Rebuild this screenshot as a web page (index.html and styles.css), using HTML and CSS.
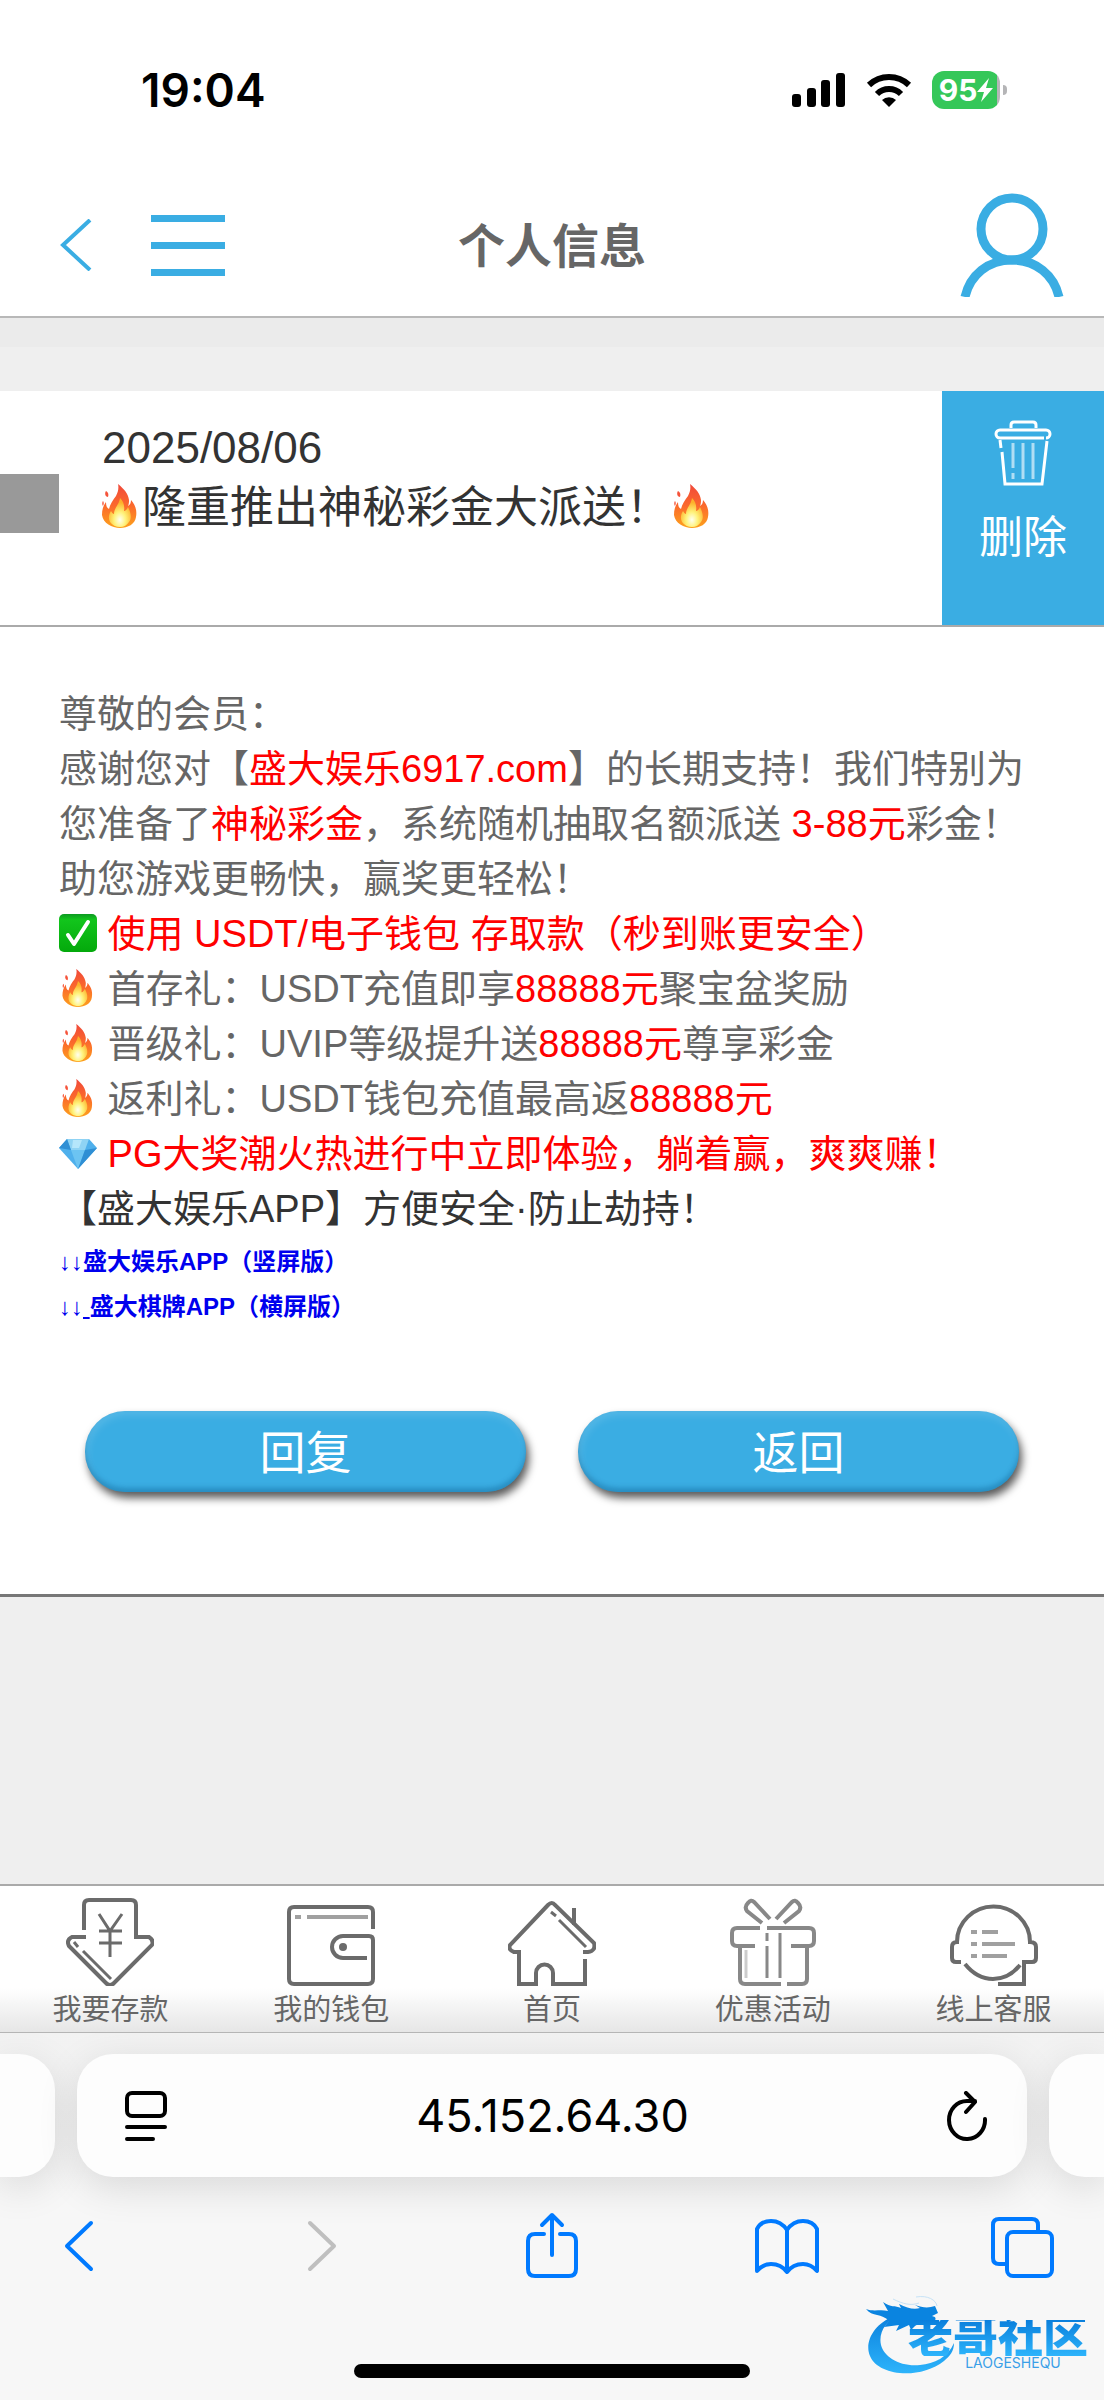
FILE: index.html
```html
<!DOCTYPE html>
<html lang="zh-CN">
<head>
    <meta charset="UTF-8">
    <meta name="viewport" content="width=device-width, initial-scale=1.0">
    <title>个人信息</title>
    <link rel="stylesheet" href="styles.css">
</head>
<body>

    <!-- shared emoji and gradients -->
    <svg class="defs" width="0" height="0" aria-hidden="true">
        <defs>
            <linearGradient id="flameOuter" x1="0" y1="0" x2="0" y2="1">
                <stop offset="0" stop-color="#f0483a"/>
                <stop offset="0.5" stop-color="#fb6a2c"/>
                <stop offset="1" stop-color="#fda11c"/>
            </linearGradient>
            <radialGradient id="flameInner" cx="0.5" cy="0.75" r="0.6">
                <stop offset="0" stop-color="#fffff0"/>
                <stop offset="0.45" stop-color="#fff27a"/>
                <stop offset="1" stop-color="#fdb02a"/>
            </radialGradient>
            <linearGradient id="greenBox" x1="0" y1="0" x2="0" y2="1">
                <stop offset="0" stop-color="#0c9a22"/>
                <stop offset="0.15" stop-color="#12c51c"/>
                <stop offset="1" stop-color="#04a90c"/>
            </linearGradient>
            <linearGradient id="dragonFill" x1="0" y1="0" x2="0" y2="1">
                <stop offset="0" stop-color="#0a7fdc"/>
                <stop offset="1" stop-color="#2db4fb"/>
            </linearGradient>
        </defs>
        <symbol id="fire" viewBox="0 0 44 44">
            <path fill="url(#flameOuter)" d="M20 0c6 5 10 9 11 16 0 2 0 4-1 6 2-1 3-3 3-6 5 6 6 11 5 17-1 7-8 11-16 11S5 39 4 31c0-5 1-9 4-13 0 4 1 6 3 7 1-5 4-9 7-13 2-4 3-8 2-12z"/>
            <path fill="#f5533a" d="M8 7c2 1 3 3 2 6-2 0-4-3-2-6zM5 17c1 1 1 3 0 5-1-1-1-4 0-5z"/>
            <path fill="url(#flameInner)" d="M22 14c3 3 5 7 4 13 2 0 3-2 4-4 3 6 4 11 1 15-2 3-5 5-9 5s-8-2-10-5c-2-4-1-8 1-11 1 2 2 3 3 3 0-6 5-9 6-16z"/>
        </symbol>
        <symbol id="check" viewBox="0 0 38 38">
            <rect x="0" y="0" width="38" height="38" rx="5" fill="url(#greenBox)"/>
            <path d="M9 21l6 9L29 8" fill="none" stroke="#fff" stroke-width="4" stroke-linecap="round" stroke-linejoin="round"/>
        </symbol>
        <symbol id="gem" viewBox="0 0 38 38">
            <path fill="#4fb0ec" d="M8 5h22l8 9-19 21L0 14z"/>
            <path fill="#8fd3f4" d="M8 5h22l-4 11H12z"/>
            <path fill="#6cc4f2" d="M12 16h14l-7 19z"/>
            <path fill="#2f8fd4" d="M26 16l12-2-19 21zM8 5l-8 9 12 2z"/>
            <path fill="#b5e6fb" d="M14 6h9l-3 8h-7z"/>
        </symbol>
    </svg>

    <div class="status-bar">
        <span class="time">19:04</span>
        <div class="status-icons">
            <svg width="54" height="34" viewBox="0 0 54 34">
                <rect x="0" y="21" width="9" height="13" rx="3"/>
                <rect x="15" y="15" width="9" height="19" rx="3"/>
                <rect x="29" y="7" width="9" height="27" rx="3"/>
                <rect x="44" y="0" width="9" height="34" rx="3"/>
            </svg>
            <svg width="46" height="34" viewBox="0 0 46 34">
                <path d="M23 34l-7-7a10 10 0 0 1 14 0z"/>
                <path d="M11 21a17 17 0 0 1 24 0M3 12a29 29 0 0 1 40 0" fill="none" stroke="#000" stroke-width="6"/>
            </svg>
            <div class="battery">
                <span>95</span>
                <svg width="16" height="24" viewBox="0 0 16 24"><path fill="#fff" d="M12 0L0 14h7L4 24l12-14H9z"/></svg>
            </div>
        </div>
    </div>

    <header class="header">
        <div class="header-left">
            <a href="#" class="icon-link" aria-label="返回上一页">
                <svg width="32" height="52" viewBox="0 0 32 52"><path d="M30 1L3 26l27 25" fill="none" stroke="#3aade3" stroke-width="4"/></svg>
            </a>
            <button class="menu-button" aria-label="菜单">
                <span></span><span></span><span></span>
            </button>
        </div>
        <h1>个人信息</h1>
        <a href="#" class="icon-link profile" aria-label="我的账户">
            <svg width="104" height="104" viewBox="0 0 104 104" fill="none" stroke="#3aade3" stroke-width="9">
                <circle cx="52" cy="36" r="31"/>
                <path d="M5 104C10 82 28 67 52 67s42 15 47 37"/>
            </svg>
        </a>
    </header>

    <main class="content">
        <div class="strip"></div>

        <div class="message-row">
            <span class="marker"></span>
            <div class="message-info">
                <div>2025/08/06</div>
                <div><svg class="emoji" role="img" aria-label="🔥"><use href="#fire"/></svg>隆重推出神秘彩金大派送！<svg class="emoji" role="img" aria-label="🔥"><use href="#fire"/></svg></div>
            </div>
            <button class="delete-button">
                <svg width="58" height="66" viewBox="0 0 58 66" fill="none" stroke="#fff" stroke-width="3">
                    <path d="M17 8V5q0-3 3-3h19q3 0 3 3v3"/>
                    <path d="M50 18H6a4 4 0 0 1 0-8h46a4 4 0 0 1 0 8"/>
                    <path d="M6 20l1 8M8 32l3 32h37l5-43"/>
                    <path d="M19 23v25M19 53v6M29 23v36M39 23v36" stroke-opacity="0.6"/>
                </svg>
                <span>删除</span>
            </button>
        </div>

        <section class="message">
            <div class="message-body">
                <p>尊敬的会员：</p>
                <p>感谢您对【<span class="red">盛大娱乐6917.com</span>】的长期支持！我们特别为您准备了<span class="red">神秘彩金</span>，系统随机抽取名额派送 <span class="red">3-88元</span>彩金！助您游戏更畅快，赢奖更轻松！</p>
                <p class="red"><svg class="emoji" role="img" aria-label="✅"><use href="#check"/></svg> 使用 USDT/电子钱包 存取款（秒到账更安全）</p>
                <p><svg class="emoji" role="img" aria-label="🔥"><use href="#fire"/></svg> 首存礼：USDT充值即享<span class="red">88888元</span>聚宝盆奖励</p>
                <p><svg class="emoji" role="img" aria-label="🔥"><use href="#fire"/></svg> 晋级礼：UVIP等级提升送<span class="red">88888元</span>尊享彩金</p>
                <p><svg class="emoji" role="img" aria-label="🔥"><use href="#fire"/></svg> 返利礼：USDT钱包充值最高返<span class="red">88888元</span></p>
                <p class="red"><svg class="emoji" role="img" aria-label="💎"><use href="#gem"/></svg> PG大奖潮火热进行中立即体验，躺着赢，爽爽赚！</p>
                <p class="dark">【盛大娱乐APP】方便安全·防止劫持！</p>
            </div>
            <div class="downloads">
                <p><a href="#"><span class="arrows">↓↓</span>盛大娱乐APP（竖屏版）</a></p>
                <p><a href="#"><span class="arrows">↓↓<u>&nbsp;</u></span>盛大棋牌APP（横屏版）</a></p>
            </div>
            <div class="actions">
                <button class="button">回复</button>
                <button class="button">返回</button>
            </div>
        </section>
    </main>

    <nav class="tab-bar">
        <a href="#">
            <svg width="88" height="88" viewBox="0 0 88 88">
                <path d="M18 32V7q0-5 5-5h42q5 0 5 5v32h13q5 3 3 8L48 85q-4 4-8 0L3 48q-3-6 3-9h14"/>
                <path class="thin" d="M33 16l11 17 12-17M44 33v26M33 33h23M33 45h23M8 44l4 5M17 53l28 28"/>
            </svg>
            <span>我要存款</span>
        </a>
        <a href="#">
            <svg width="88" height="88" viewBox="0 0 88 88">
                <path d="M86 31V14q0-5-5-5H7q-5 0-5 5v67q0 5 5 5h74q5 0 5-5V42q0-4-4-4H56a11 11 0 0 0 0 22h24"/>
                <circle class="dot" cx="56" cy="49" r="4"/>
                <path class="soft" d="M8 19h6M20 19h61"/>
            </svg>
            <span>我的钱包</span>
        </a>
        <a href="#">
            <svg width="88" height="88" viewBox="0 0 88 88">
                <path d="M77 61v25H45V75a8 8 0 0 0-17 0v11H11V54H6q-6-2-4-7L40 7q4-4 7 0l39 38q2 8-6 9h-5M66 10v17"/>
                <path class="thin" d="M43 14l5 4M51 22l27 27"/>
            </svg>
            <span>首页</span>
        </a>
        <a href="#">
            <svg class="pale" width="88" height="88" viewBox="0 0 88 88">
                <path d="M31 30H8q-5 0-5 5v8q0 5 5 5h18M38 30h42q5 0 5 5v8q0 5-5 5H62M11 48v33q0 5 5 5h36M78 48v33q0 5-5 5H58"/>
                <path d="M41 21L25 4q-3-3-6 1-4 4-1 8l15 12M47 21L63 4q3-3 6 1 4 4 1 8L55 25"/>
                <path class="thin" d="M38 35v8M38 48v32M51 35v45"/>
                <path class="faint" d="M17 52v28"/>
            </svg>
            <span>优惠活动</span>
        </a>
        <a href="#">
            <svg width="88" height="88" viewBox="0 0 88 88">
                <path d="M11 64H6q-4 0-4-4V49q0-5 5-5a36 35 0 0 1 73 0q6 0 6 5v11q0 4-4 4h-8v22H48M15 66q12 15 28 15t27-14"/>
                <path class="soft" d="M21 34h6M32 34h16M21 46h6M32 46h33M21 58h6M32 58h25"/>
            </svg>
            <span>线上客服</span>
        </a>
    </nav>

    <footer class="browser">
        <div class="address-row">
            <div class="side-tab left"></div>
            <div class="address">
                <button aria-label="阅读器">
                    <svg width="42" height="50" viewBox="0 0 42 50" fill="none" stroke="#000" stroke-width="4" stroke-linecap="round">
                        <rect x="2" y="2" width="38" height="23" rx="5"/>
                        <path d="M2 36h38M2 48h26"/>
                    </svg>
                </button>
                <input type="text" aria-label="地址" value="45.152.64.30" readonly>
                <button aria-label="刷新">
                    <svg width="42" height="50" viewBox="0 0 42 50" fill="none" stroke="#000" stroke-width="4" stroke-linecap="round" stroke-linejoin="round">
                        <path d="M39 28a18 19 0 1 1-18-18h8M20 2l9 9-9 10"/>
                    </svg>
                </button>
            </div>
            <div class="side-tab right"></div>
        </div>

        <div class="toolbar">
            <button aria-label="后退"><svg width="66" height="68" viewBox="0 0 66 68"><path d="M45 12L21 35l24 23"/></svg></button>
            <button class="disabled" aria-label="前进" disabled><svg width="66" height="68" viewBox="0 0 66 68"><path d="M28 12l24 23-24 23"/></svg></button>
            <button aria-label="分享"><svg width="66" height="68" viewBox="0 0 66 68"><path d="M27 23h-9q-7 0-7 7v28q0 7 7 7h34q7 0 7-7V30q0-7-7-7h-9M35 44V4M25 14L35 4l10 10"/></svg></button>
            <button aria-label="书签"><svg width="66" height="68" viewBox="0 0 66 68"><path d="M34 19Q28 10 18 10 8 10 4 18v42q6-7 14-7 10 0 16 8 6-8 16-8 8 0 14 7V18Q60 10 50 10q-10 0-16 9zM34 19v42"/></svg></button>
            <button aria-label="标签页"><svg width="66" height="68" viewBox="0 0 66 68"><path d="M17 53h-6q-6 0-6-6V14q0-6 6-6h33q6 0 6 6v7"/><rect x="19" y="21" width="45" height="44" rx="6"/></svg></button>
        </div>

        <div class="home-indicator"></div>

        <div class="watermark">
            <svg width="100" height="80" viewBox="0 0 100 80">
                <path fill="url(#dragonFill)" d="M28 20C8 28-2 46 4 60c8 20 50 24 74 5 6-5 10-10 10-18-6 14-20 21-34 22-20 2-36-8-39-20-3-13 6-25 18-30z"/>
                <path fill="#0a84e0" d="M0 13c8 3 14 0 22 2l-5-9c8 6 12 3 18 6l-2-4c8 4 15 6 21 4l-5-3c8 3 14 3 20 1l3 7-6 3c4 1 4 2 3 5-5-1-8-1-11 1l5 4c-7-1-10-3-14 0l-4 4-2-5-13 6 3-6-15 2 5-6C16 17 6 21 0 13z"/>
                <path d="M27 3c10 5 18 7 26 4M50 1c12-2 20 3 21 9" fill="none" stroke="#c6e2f6" stroke-width="1"/>
            </svg>
            <div class="watermark-text">
                <strong>老哥社区</strong>
                <small>LAOGESHEQU</small>
            </div>
        </div>
    </footer>

</body>
</html>
```
FILE: styles.css
```css
* {
    box-sizing: border-box;
}
body {
    display: flex;
    flex-direction: column;
    min-height: 100vh;
    margin: 0;
    background-color: #efefef;
    color: #666666;
    font-family: "Liberation Sans", "Noto Sans CJK SC", sans-serif;
}
button {
    padding: 0;
    border: none;
    background: none;
    color: inherit;
    font-family: inherit;
    cursor: pointer;
}
a {
    text-decoration: none;
}
svg {
    display: block;
}
h1, p {
    margin: 0;
}
.defs {
    position: absolute;
}

/* phone status bar */
.status-bar {
    display: flex;
    align-items: center;
    justify-content: space-between;
    height: 176px;
    padding: 4px 104px 0 141px;
    background-color: #ffffff;
    color: #000000;
    font-family: Inter, sans-serif;
}
.time {
    font-size: 46px;
    font-weight: 600;
}
.status-icons {
    display: flex;
    align-items: center;
    gap: 20px;
}
.battery {
    position: relative;
    display: flex;
    align-items: center;
    justify-content: center;
    width: 68px;
    height: 38px;
    border-radius: 12px;
    background: linear-gradient(to right, #35c759 65px, #b5b5b7 65px);
    color: #ffffff;
    font-size: 30px;
    font-weight: 700;
}
.battery::after {
    content: "";
    position: absolute;
    right: -7px;
    width: 4px;
    height: 10px;
    border-radius: 0 5px 5px 0;
    background-color: #b5b5b7;
}

/* header */
.header {
    display: grid;
    grid-template-columns: 1fr auto 1fr;
    align-items: center;
    height: 142px;
    padding: 0 40px 2px 60px;
    border-bottom: 2px solid #b8b8b8;
    background-color: #ffffff;
}
.header-left {
    display: flex;
    align-items: center;
    gap: 59px;
}
.menu-button {
    display: flex;
    flex-direction: column;
    gap: 20px;
}
.menu-button span {
    width: 74px;
    height: 7px;
    background-color: #3aade3;
}
.header h1 {
    margin-right: 20px;
    padding-top: 4px;
    font-size: 47px;
    font-weight: bold;
    line-height: 60px;
}
.profile {
    justify-self: end;
}

/* message */
.content {
    flex: 1;
}
.strip {
    height: 73px;
    border-top: 29px solid #ebebeb;
}
.message-row {
    display: flex;
    align-items: stretch;
    height: 236px;
    border-bottom: 2px solid #aaaaaa;
    background-color: #ffffff;
}
.marker {
    width: 59px;
    height: 59px;
    margin-top: 83px;
    background-color: #999999;
}
.message-info {
    flex: 1;
    padding: 27px 0 0 39px;
    color: #333333;
    font-size: 44px;
    line-height: 60px;
}
.message-info div:first-child {
    padding-left: 4px;
}
.emoji {
    display: inline-block;
    width: 1em;
    height: 1em;
    vertical-align: -5px;
}
.delete-button {
    display: flex;
    flex-direction: column;
    align-items: center;
    gap: 16px;
    width: 162px;
    padding-top: 29px;
    background-color: #3aade3;
    color: #ffffff;
    font-size: 44px;
}
.message {
    padding: 60px 59px 102px;
    border-bottom: 3px solid #777777;
    background-color: #ffffff;
}
.message-body {
    font-size: 38px;
    line-height: 55px;
}
.red {
    color: #ff0000;
}
.dark {
    color: #333333;
}
.downloads {
    padding-top: 2px;
    font-size: 24px;
    font-weight: bold;
    line-height: 45px;
}
.downloads a {
    color: #0000ee;
}
.arrows {
    font-size: 24px;
    font-weight: normal;
}
.actions {
    display: flex;
    gap: 52px;
    padding: 82px 26px 0;
}
.button {
    flex: 1;
    height: 81px;
    padding-bottom: 6px;
    border-radius: 40px;
    background-color: #3aade3;
    box-shadow: 3px 6px 8px rgba(0, 0, 0, 0.65), inset 0 -4px 5px rgba(0, 80, 130, 0.35), inset 2px 4px 8px rgba(255, 255, 255, 0.15);
    color: #ffffff;
    font-size: 46px;
}

/* site navigation */
.tab-bar {
    display: grid;
    grid-template-columns: repeat(5, 1fr);
    height: 149px;
    padding-top: 12px;
    border-top: 2px solid #aaaaaa;
    border-bottom: 1px solid #b5b5b5;
    background: linear-gradient(#ffffff 70%, #e6e6e6);
}
.tab-bar a {
    display: flex;
    flex-direction: column;
    align-items: center;
    color: #666666;
    font-size: 29px;
    line-height: 48px;
}
.tab-bar path {
    fill: none;
    stroke: #6b6b6b;
    stroke-width: 4;
}
.tab-bar .dot {
    fill: #6b6b6b;
}
.tab-bar .pale path {
    stroke: #888888;
}
.tab-bar .thin {
    stroke-width: 3;
}
.tab-bar .soft {
    stroke: #a0a0a0;
}
.tab-bar .pale .faint {
    stroke: #cccccc;
    stroke-width: 3;
}

/* browser bars */
.browser {
    position: relative;
    height: 367px;
    padding-top: 21px;
    overflow: hidden;
    background: linear-gradient(#f2f2f2, #f7f7f7 45%);
}
.address-row {
    display: flex;
    gap: 22px;
}
.side-tab, .address {
    height: 123px;
    background-color: #fdfdfd;
    box-shadow: 0 10px 40px rgba(0, 0, 0, 0.12);
}
.side-tab {
    width: 55px;
}
.left {
    border-radius: 0 36px 36px 0;
}
.right {
    border-radius: 36px 0 0 36px;
}
.address {
    display: flex;
    flex: 1;
    align-items: center;
    padding: 0 39px 0 48px;
    border-radius: 36px;
}
.address input {
    flex: 1;
    min-width: 0;
    padding: 0 8px 0 0;
    border: none;
    background: none;
    color: #000000;
    font-family: Inter, sans-serif;
    font-size: 45px;
    text-align: center;
}
.toolbar {
    display: flex;
    justify-content: space-between;
    padding: 34px 50px 0 46px;
}
.toolbar path, .toolbar rect {
    fill: none;
    stroke: #007aff;
    stroke-width: 4;
    stroke-linecap: round;
    stroke-linejoin: round;
}
.toolbar .disabled path {
    stroke: #bfbfbf;
}
.home-indicator {
    width: 396px;
    height: 14px;
    margin: 85px auto 0;
    border-radius: 7px;
    background-color: #000000;
}
.watermark {
    position: absolute;
    right: 16px;
    bottom: 24px;
    display: flex;
}
.watermark-text {
    display: flex;
    flex-direction: column;
    align-items: center;
    margin-left: -58px;
    padding-top: 24px;
}
.watermark-text strong {
    background: linear-gradient(#0a7fdc, #2db4fb);
    background-clip: text;
    -webkit-background-clip: text;
    color: transparent;
    font-size: 45px;
    font-weight: 900;
    line-height: 36px;
}
.watermark-text small {
    padding-left: 30px;
    color: #3a9fe8;
    font-family: Inter, sans-serif;
    font-size: 14px;
    line-height: 14px;
}
```
